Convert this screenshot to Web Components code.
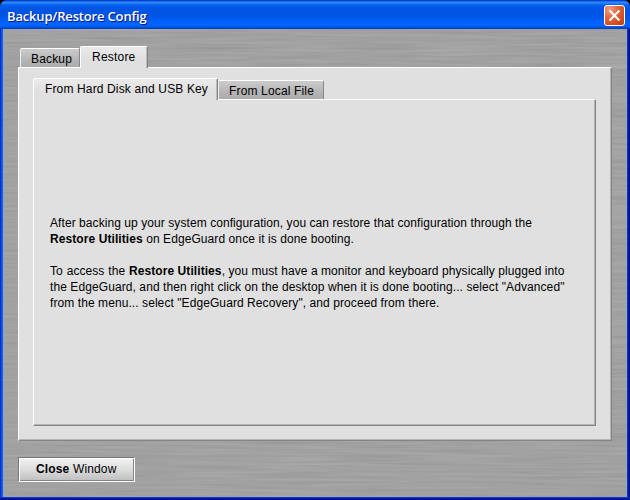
<!DOCTYPE html>
<html lang="en"><head><meta charset="utf-8"><title>Backup/Restore Config</title>
<style>
body{margin:0;width:630px;height:500px;overflow:hidden;background:#000;font:12px/16px "Liberation Sans",Arial,sans-serif;color:#000}
</style></head><body>
<config-window>
  <fit-line slot="title" width="139.5">Backup/Restore Config</fit-line>
  <tab-panel class="outer" style="--h:374px">
    <tab-item slot="tabs" style="--w:60px;--h:19px;--px:11px;--dy:1px"><fit-line width="41">Backup</fit-line></tab-item>
    <tab-item slot="tabs" active style="--w:68px;--h:21px;--px:12px;--dy:0px"><fit-line width="43.5">Restore</fit-line></tab-item>
    <tab-panel class="inner" style="--h:327px">
      <tab-item slot="tabs" active style="--w:185px;--h:21px;--px:12px;--dy:0px"><fit-line width="163">From Hard Disk and USB Key</fit-line></tab-item>
      <tab-item slot="tabs" style="--w:106px;--h:19px;--px:11px;--dy:1px"><fit-line width="85">From Local File</fit-line></tab-item>
      <restore-help>
        <fit-line width="482">After backing up your system configuration, you can restore that configuration through the</fit-line>
        <fit-line width="304"><b>Restore Utilities</b> on EdgeGuard once it is done booting.</fit-line>
        <fit-line class="gap" width="514.5"><span style="word-spacing:.4px">To access the </span><b>Restore Utilities</b>, you must have a monitor and keyboard physically plugged into</fit-line>
        <fit-line width="514.5">the EdgeGuard, and then right click on the desktop when it is done booting... select "Advanced"</fit-line>
        <fit-line width="389.5">from the menu... select "EdgeGuard Recovery", and proceed from there.</fit-line>
      </restore-help>
    </tab-panel>
  </tab-panel>
  <push-button><fit-line width="80.5"><b>Close</b> Window</fit-line></push-button>
</config-window>
<script>
const define=(name,html,ready)=>customElements.define(name,class extends HTMLElement{
  connectedCallback(){
    if(this.shadowRoot)return;
    this.attachShadow({mode:'open'}).innerHTML=html;
    if(ready)ready.call(this);
  }
});

define('close-box',`<style>
:host{display:block;width:21px;height:21px}svg{display:block}</style>
<svg width="21" height="21" viewBox="0 0 21 21"><defs><radialGradient id="r" cx=".25" cy=".2" r="1"><stop offset="0" stop-color="#f0a088"/><stop offset=".4" stop-color="#e4683f"/><stop offset="1" stop-color="#c83c0c"/></radialGradient></defs>
<rect x=".5" y=".5" width="20" height="20" rx="2.5" fill="url(#r)" stroke="#fff"/>
<path d="M5.6 5.6 15.4 15.4M15.4 5.6 5.6 15.4" stroke="#fff" stroke-width="2.1" fill="none"/></svg>`);

define('title-bar',`<style>
:host{display:flex;box-sizing:border-box;height:29px;padding:5px 5px 0 7px;justify-content:space-between;
background:linear-gradient(#0038c0 0,#0048d8 1px,#3090ff 2px,#2a80fa 3px,#0562ee 5px,#0055e5 8px,#0054e2 15px,#005cf4 20px,#0066ff 24px,#0062fa 26px,#0048d0 28px,#0038b8 29px);
font:600 13px/18px "Open Sans","Noto Sans",sans-serif;color:#fff;text-shadow:1px 1px 0 #0a1883}
.label{padding-top:2px}
</style><div class="label"><slot></slot></div><close-box></close-box>`);

define('config-window',`<style>
:host{display:block;box-sizing:border-box;width:630px;height:500px;overflow:hidden;border-radius:7px 7px 0 0;background:#0030d0}
.body{display:grid;margin:0 3px;height:468px;box-sizing:border-box;overflow:hidden;background:#a1a1a1}
.frame{background:linear-gradient(90deg,#0030d0 0 1px,#0054e8 1px 2px,#0864f0 2px 3px,transparent 3px calc(100% - 3px),#0038d0 calc(100% - 3px) calc(100% - 2px),#0018a8 calc(100% - 2px) calc(100% - 1px),#001080 calc(100% - 1px))}
.body>*{grid-area:1/1}svg{display:block}
.content{display:flex;flex-direction:column;align-items:flex-start;gap:16px;padding:17px 0 0 15px}
.foot{height:3px;background:linear-gradient(#0838d0 0 1px,#0018b0 1px 2px,#001088 2px)}
</style><title-bar><slot name="title"></slot></title-bar>
<div class="frame"><div class="body">
<svg width="624" height="468"><filter id="m" x="0" y="0" width="100%" height="100%" color-interpolation-filters="sRGB"><feTurbulence type="fractalNoise" baseFrequency=".012 .38" numOctaves="2" seed="8"/><feColorMatrix values=".085 .03 0 0 .575 .085 .03 0 0 .575 .085 .03 0 0 .575 0 0 0 0 1"/></filter><rect width="624" height="468" filter="url(#m)"/></svg>
<div class="content"><slot></slot></div></div></div><div class="foot"></div>`);

define('tab-item',`<style>
:host{display:block;box-sizing:border-box;width:var(--w);height:var(--h);padding:var(--dy) 0 0 calc(var(--px) - 1px);line-height:18px;
background:linear-gradient(#ccc,#b5b5b5 60%,#acacac);border-top:1px solid #fff;border-left:1px solid #eee;border-right:1px solid #888;border-radius:2px 2px 0 0}
:host([active]){height:calc(var(--h) + 1px);margin-bottom:-1px;background:linear-gradient(#eaeaea,#e0e0e0 60%);border-top-color:#fff;border-left-color:#fff;border-right-color:#808080;box-shadow:inset -1px 0 #bdbdbd;padding-top:1px;z-index:1}
</style><slot></slot>`);

define('tab-panel',`<style>
:host{display:block}
.tabs{display:flex;align-items:flex-end;height:21px}
:host(.outer) .tabs{padding-left:2px}
.page{box-sizing:border-box;height:var(--h);background:#e0e0e0;border:1px solid #fff;border-right-color:#848484;border-bottom-color:#848484;box-shadow:inset -1px -1px #b4b4b4}
:host(.outer) .page{width:594px;padding:10px 0 0 14px}
:host(.inner) .page{width:563px;padding:115px 0 0 16px}
</style><div class="tabs"><slot name="tabs"></slot></div><div class="page"><slot></slot></div>`);

define('restore-help',`<style>:host{display:block}::slotted(.gap){margin-top:16px}</style><slot></slot>`);

define('push-button',`<style>
:host{display:block;box-sizing:border-box;width:117px;height:25px;padding:3px 0 0 17px;line-height:16px;border:1px solid #777;border-right-color:#fff;border-bottom-color:#fff;box-shadow:inset 1px 1px #fff,inset -1px -1px #858585;background:linear-gradient(#f3f3f3,#dcdcdc 50%,#bebebe)}
</style><slot></slot>`);

// A single line of text tracked out to the width it is given.
// Defined last, so that the fonts of its containers already apply when it measures itself.
define('fit-line',`<style>:host{display:block;white-space:nowrap;width:max-content}</style><slot></slot>`,function(){
  const n=this.textContent.length;
  const natural=this.getBoundingClientRect().width;
  this.style.letterSpacing=((+this.getAttribute('width')-natural)/n).toFixed(4)+'px';
});
</script></body></html>
